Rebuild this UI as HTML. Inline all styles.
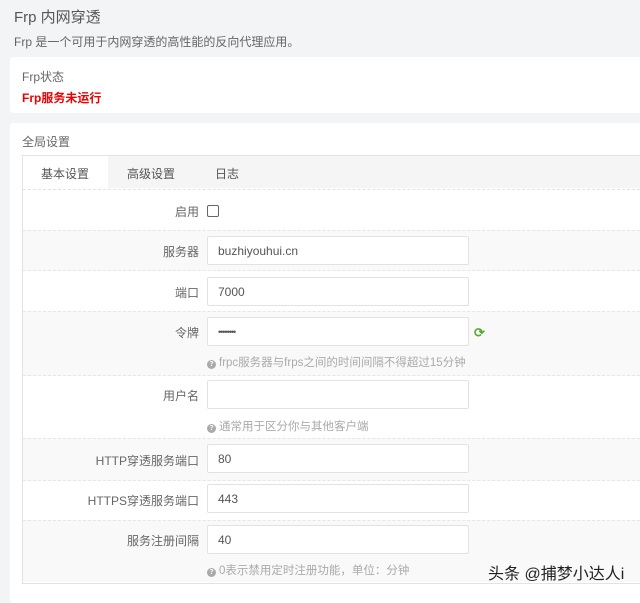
<!DOCTYPE html><html><head><meta charset="utf-8"><style>
body{margin:0;width:640px;height:592px;overflow:hidden;background:#f2f4f6;font-family:"Liberation Sans","Noto Sans CJK SC",sans-serif;color:#555;position:relative}
.a{position:absolute}
.inp{position:absolute;left:207px;width:262px;height:29px;border:1px solid #e2e2e2;background:#fff;box-sizing:border-box;font-size:12px;color:#555;padding:7px 0 0 10px;border-radius:2px}
.lb{position:absolute;right:441px;font-size:12px;color:#666}
.row{position:absolute;left:23px;width:617px;border-top:1px dashed #e6e6e6}
.help{position:absolute;left:207px;font-size:11.5px;color:#aaa}
.help b{display:inline-block;width:9px;height:9px;border-radius:50%;background:#aaa;color:#fff;font-size:7px;text-align:center;line-height:9px;margin-right:3px;vertical-align:0}
</style></head><body>
<div class="a" style="left:14px;top:6px;font-size:15px;color:#555">Frp 内网穿透</div>
<div class="a" style="left:14px;top:33px;font-size:12px;color:#666">Frp 是一个可用于内网穿透的高性能的反向代理应用。</div>
<div class="a" style="left:10px;top:57px;width:640px;height:56px;background:#fff;border-radius:3px"></div>
<div class="a" style="left:22px;top:68px;font-size:12px;color:#666">Frp状态</div>
<div class="a" style="left:22px;top:89px;font-size:12px;color:#e00;font-weight:bold">Frp服务未运行</div>
<div class="a" style="left:10px;top:123px;width:640px;height:480px;background:#fff;border-radius:3px"></div>
<div class="a" style="left:22px;top:133px;font-size:12px;color:#666">全局设置</div>
<div class="a" style="left:22px;top:155px;width:630px;height:427px;border:1px solid #e3e3e3;background:#fff"></div>
<div class="a" style="left:23px;top:156px;width:617px;height:32px;background:#f5f5f5"></div>
<div class="a" style="left:23px;top:156px;width:85px;height:33px;background:#fff"></div>
<div class="a" style="left:41px;top:165px;font-size:12px;color:#555">基本设置</div>
<div class="a" style="left:127px;top:165px;font-size:12px;color:#555">高级设置</div>
<div class="a" style="left:215px;top:165px;font-size:12px;color:#555">日志</div>
<div class="row" style="top:189px;height:41px;border-top:1px dashed #e3e3e3"></div>
<div class="lb" style="top:203px">启用</div>
<div class="a" style="left:207px;top:205px;width:10px;height:10px;border:1px solid #666;border-radius:2px"></div>
<div class="row" style="top:230px;height:40px;background:#f9f9f9"></div>
<div class="lb" style="top:243px">服务器</div><div class="inp" style="top:236px">buzhiyouhui.cn</div>
<div class="row" style="top:270px;height:41px"></div>
<div class="lb" style="top:284px">端口</div><div class="inp" style="top:277px">7000</div>
<div class="row" style="top:311px;height:64px;background:#f9f9f9"></div>
<div class="lb" style="top:324px">令牌</div><div class="inp" style="top:317px;font-size:9px;padding-top:9px;letter-spacing:-1px">••••••••</div>
<div class="a" style="left:474px;top:325px;color:#5a3;font-size:13px;font-weight:bold">⟳</div>
<div class="help" style="top:354px"><b>?</b>frpc服务器与frps之间的时间间隔不得超过15分钟</div>
<div class="row" style="top:375px;height:63px"></div>
<div class="lb" style="top:387px">用户名</div><div class="inp" style="top:380px"></div>
<div class="help" style="top:418px"><b>?</b>通常用于区分你与其他客户端</div>
<div class="row" style="top:438px;height:42px;background:#f9f9f9"></div>
<div class="lb" style="top:452px">HTTP穿透服务端口</div><div class="inp" style="top:444px">80</div>
<div class="row" style="top:480px;height:40px"></div>
<div class="lb" style="top:492px">HTTPS穿透服务端口</div><div class="inp" style="top:484px">443</div>
<div class="row" style="top:520px;height:61px;background:#f9f9f9"></div>
<div class="lb" style="top:532px">服务注册间隔</div><div class="inp" style="top:525px">40</div>
<div class="help" style="top:562px"><b>?</b>0表示禁用定时注册功能，单位：分钟</div>
<div class="a" style="left:488px;top:560px;font-size:16px;color:#222">头条 @捕梦小达人i</div>
</body></html>
